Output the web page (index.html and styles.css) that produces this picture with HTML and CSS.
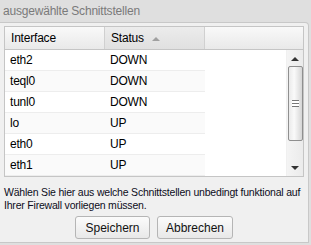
FILE: index.html
```html
<!DOCTYPE html>
<html lang="de">
<head>
  <meta charset="UTF-8">
  <title>ausgewählte Schnittstellen</title>
  <link rel="stylesheet" href="styles.css">
</head>
<body>
  <div class="window">
    <div class="title">ausgewählte Schnittstellen</div>

    <div class="panel">
      <div class="grid">
        <div class="grid-head">
          <div class="col">Interface</div>
          <div class="col sorted">Status <span class="sort-arrow"></span></div>
          <div class="col-fill"></div>
        </div>
        <div class="grid-body">
          <div class="rows">
            <div class="row"><span class="cell">eth2</span><span class="cell">DOWN</span></div>
            <div class="row alt"><span class="cell">teql0</span><span class="cell">DOWN</span></div>
            <div class="row"><span class="cell">tunl0</span><span class="cell">DOWN</span></div>
            <div class="row alt"><span class="cell">lo</span><span class="cell">UP</span></div>
            <div class="row"><span class="cell">eth0</span><span class="cell">UP</span></div>
            <div class="row alt"><span class="cell">eth1</span><span class="cell">UP</span></div>
          </div>
          <div class="scrollbar">
            <div class="arrow up"></div>
            <div class="thumb"><span class="grip"></span></div>
            <div class="arrow down"></div>
          </div>
        </div>
      </div>

      <p class="hint">Wählen Sie hier aus welche Schnittstellen unbedingt funktional auf Ihrer Firewall vorliegen müssen.</p>

      <div class="buttons">
        <button class="btn save">Speichern</button>
        <button class="btn cancel">Abbrechen</button>
      </div>
    </div>
  </div>
</body>
</html>
```

FILE: styles.css
```css
* { margin: 0; padding: 0; box-sizing: border-box; }
body { background: #dfdfdf; font-family: "Liberation Sans", Arial, sans-serif; font-size: 11px; color: #000; }
.window { width: 311px; height: 245px; }
.title { height: 22px; line-height: 22px; padding-left: 3px; font-size: 12px; letter-spacing: -0.2px; color: #7a7a7a; }
.panel { width: 309px; height: 221px; background: #f0f0f0; border: 1px solid #c8c8c8; border-left: none; border-top-right-radius: 4px; padding: 3px 0 0 4px; }
.grid { width: 300px; border: 1px solid #c5c5c5; background: #fff; }
.grid-head { display: flex; height: 23px; border-bottom: 1px solid #c5c5c5; background: linear-gradient(#f9f9f9, #e9e9e9); }
.col { width: 100px; line-height: 22px; padding-left: 6px; font-size: 12px; letter-spacing: -0.2px; border-right: 1px solid #d0d0d0; display: flex; align-items: center; gap: 8px; }
.col.sorted { background: linear-gradient(#ececec, #e0e0e0); }
.col-fill { flex: 1; }
.sort-arrow { width: 0; height: 0; border-left: 4px solid transparent; border-right: 4px solid transparent; border-bottom: 4px solid #a0a0a0; margin-top: 1px; }
.grid-body { display: flex; height: 126px; }
.rows { width: 200px; }
.row { display: flex; height: 21px; border-bottom: 1px solid #ededed; align-items: center; font-size: 12px; letter-spacing: -0.2px; }
.row.alt { background: #fafafa; }
.cell { width: 100px; padding-left: 5px; }
.scrollbar { margin-left: auto; width: 17px; display: flex; flex-direction: column; align-items: center; background: linear-gradient(90deg, #f4f4f4, #ebebeb); border-left: 1px solid #f0f0f0; }
.arrow { width: 0; height: 0; border-left: 4px solid transparent; border-right: 4px solid transparent; }
.arrow.up { border-bottom: 4px solid #333; margin: 7px 0 5px; }
.arrow.down { border-top: 4px solid #333; margin-top: auto; margin-bottom: 6px; }
.thumb { width: 15px; height: 75px; border: 1px solid #8f8f8f; border-radius: 2px; background: linear-gradient(90deg, #eaeaea, #fafafa 40%, #d6d6d6); display: flex; align-items: center; justify-content: center; }
.grip { width: 7px; height: 7px; border-top: 1px solid #777; border-bottom: 1px solid #777; background: linear-gradient(#fff 0 2px, #777 2px 3px, #fff 3px); }
.hint { margin-top: 9px; line-height: 13px; font-size: 10.5px; letter-spacing: -0.2px; color: #0c0c20; padding-right: 2px; }
.buttons { display: flex; justify-content: center; gap: 7px; margin-top: 4px; padding-right: 4px; }
.btn { height: 23px; font-family: inherit; font-size: 12px; color: #111; background: linear-gradient(#fbfbfb, #e8e8e8); border: 1px solid #b5b5b5; border-radius: 3px; }
.btn.save { width: 75px; }
.btn.cancel { width: 76px; }
```
